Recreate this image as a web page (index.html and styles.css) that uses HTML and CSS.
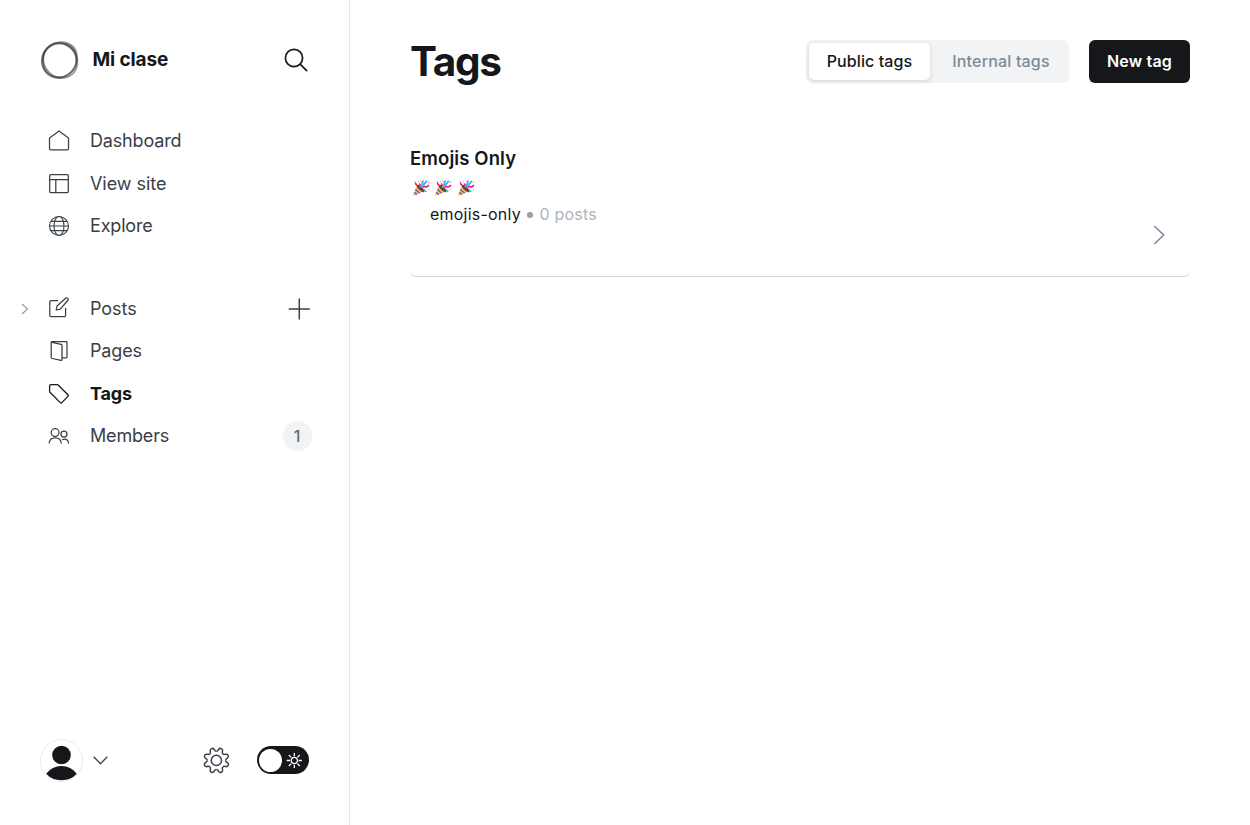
FILE: index.html
```html
<!DOCTYPE html>
<html lang="en">
<head>
<meta charset="utf-8">
<title>Tags</title>
<link rel="stylesheet" href="styles.css">
</head>
<body>
<svg class="defs" width="0" height="0">
  <symbol id="party" viewBox="0 0 18 18">
    <path d="M.8 16.7 5 6.2 12 12.6Z" fill="#ffc23d"/>
    <path d="M3.4 10.4 7.6 14.3M2.2 13.4 4.9 15.6" stroke="#6d62d8" stroke-width="1.5"/>
    <ellipse cx="8.6" cy="9.5" rx="1.9" ry="4.9" transform="rotate(-46 8.6 9.5)" fill="#6b4030"/>
    <path d="M7.9 8.6Q9 5.8 7.2 4.5M5.2 6.2Q2.8 5.4 4 3.5" fill="none" stroke="#f5128c" stroke-width="1.5"/>
    <path d="M8.6 8.6Q8.8 6 10.9 5.6 9.5 3.5 11.5 1.7M12 5.6 14.8 1.8M12 10.7 14.2 13" fill="none" stroke="#2bb6ee" stroke-width="1.7"/>
    <path d="M10.6 8.6Q12 6.4 13.3 8 14.8 8.4 16.9 6.1" fill="none" stroke="#f5128c" stroke-width="1.6"/>
    <path d="M2.2 1.8h1.3v1.3H2.2zM15.9 10h1.2v1.2h-1.2zM8 1.3h1.2v1.2H8z" fill="#ffc23d"/>
    <path d="M15.8 2.6h1.4V4h-1.4zM5.9 2h1.3v1.2H5.9z" fill="#ff92c6"/>
  </symbol>
</svg>
<div class="app">
  <aside class="sidebar">
    <header class="brand">
      <svg class="brand-logo" width="40" height="40" viewBox="0 0 40 40" fill="none">
        <ellipse cx="20.4" cy="20.4" rx="18.3" ry="16.4" transform="rotate(55 20.4 20.4)" stroke="#333" stroke-opacity=".5" stroke-width="1.6"/>
        <ellipse cx="19.2" cy="20.4" rx="17.2" ry="16.9" stroke="#222" stroke-opacity=".5" stroke-width="1.9"/>
        <ellipse cx="19.5" cy="20" rx="18.3" ry="16.6" transform="rotate(-52 19.5 20)" stroke="#333" stroke-opacity=".5" stroke-width="1.9"/>
        <path d="M22 3.2Q32 .8 36.5 9.5 39.5 17 36.2 25.5 37 14 31.5 9 27.5 4.5 22 3.2Z" fill="#555" fill-opacity=".4"/>
        <path d="M6.5 9Q.8 15 2.5 24 4 31 9.5 35 3.5 27 4 20 4.2 14 6.5 9Z" fill="#333" fill-opacity=".35"/>
      </svg>
      <span class="brand-name">Mi clase</span>
      <svg class="search" width="26" height="26" viewBox="0 0 26 26"><circle cx="11" cy="11" r="8.6"/><path d="m17.1 17.1 7 7"/></svg>
    </header>
    <nav class="nav">
      <ul class="group">
        <li class="item"><svg class="icon" viewBox="0 0 22 22"><path d="M11 1 1.5 8.1V18.5q0 1.3 1.3 1.3h16.4q1.3 0 1.3-1.3V8.1Z"/></svg><span class="label">Dashboard</span></li>
        <li class="item wide"><svg class="icon" viewBox="0 0 22 22"><rect x="1.7" y="2.5" width="18.6" height="18" rx="1"/><path d="M1.7 7.6h18.6M7.8 7.6v13"/></svg><span class="label">View site</span></li>
        <li class="item"><svg class="icon globe" viewBox="0 0 22 22"><circle cx="11" cy="11" r="9.5"/><ellipse cx="11" cy="11" rx="5" ry="9.5"/><path d="M1.5 11h19M3 6.4h16M3 15.6h16"/></svg><span class="label">Explore</span></li>
      </ul>
      <ul class="group">
        <li class="item wide"><svg class="expand" width="8" height="12" viewBox="0 0 8 12"><path d="m1 1 5.5 5L1 11"/></svg><svg class="icon" viewBox="0 0 22 22"><path d="M10 3.6H2.9q-1.1 0-1.1 1.1v13.7q0 1.1 1.1 1.1h13.6q1.1 0 1.1-1.1V11"/><path d="m8.2 13 .8-4 8.6-7.8q1.1-.8 2.1.2t.1 2.1L12.2 12.2Z"/></svg><span class="label">Posts</span><svg class="plus" width="22" height="22" viewBox="0 0 22 22"><path d="M11.3.5v21M.8 11h21"/></svg></li>
        <li class="item"><svg class="icon" viewBox="0 0 22 22"><path d="M3.2 2.2 13.2 4.4q.8.2.8 1v14.4q0 .8-.9.6L4.2 18.5q-1-.2-1-1V2.2q0-.7 1-.7h14q.8 0 .8.8v14.8q0 .8-.8.8H14"/></svg><span class="label">Pages</span></li>
        <li class="item active"><svg class="icon" viewBox="0 0 22 22"><path d="M1.6 9.4V3.7q0-1.2 1.2-1.2H9q.6 0 1.1.5l9.8 9.8q.8.8 0 1.6l-6 6.2q-.8.8-1.6 0L2.2 10.5Q1.6 10 1.6 9.4Z"/></svg><span class="label">Tags</span></li>
        <li class="item"><svg class="icon" viewBox="0 0 22 22"><circle cx="7.1" cy="7.6" r="3.9"/><circle cx="16" cy="9" r="3"/><path d="M1.2 18.5q.2-5.7 6-5.7t6 5.7M14.2 14.7q5.8-2 6.5 3.8"/></svg><span class="label">Members</span><span class="count">1</span></li>
      </ul>
    </nav>
    <footer class="account">
      <svg class="avatar" width="44" height="44" viewBox="0 0 44 44"><circle cx="21.5" cy="21.5" r="21" fill="#fff" stroke="#e9ebee"/><circle cx="21.5" cy="16" r="9.3"/><path d="M6.2 34.7Q12 27 21.5 27t15.3 7.7Q31 41.2 21.5 41.2T6.2 34.7Z"/></svg>
      <svg class="caret" width="16" height="10" viewBox="0 0 16 10"><path d="m.7.7 6.8 7 6.8-7"/></svg>
      <svg class="gear" width="28" height="28" viewBox="-14.4 -14.4 28 28">
        <circle r="5.1"/>
        <path id="tooth" transform="rotate(22.5)" d="M-3.52-8.5C-2.2-9.05-2.3-9.8-2.1-11Q-1.8-12.8 0-12.8T2.1-11C2.3-9.8 2.2-9.05 3.52-8.5"/>
        <use href="#tooth" transform="rotate(45)"/><use href="#tooth" transform="rotate(90)"/><use href="#tooth" transform="rotate(135)"/><use href="#tooth" transform="rotate(180)"/><use href="#tooth" transform="rotate(225)"/><use href="#tooth" transform="rotate(270)"/><use href="#tooth" transform="rotate(315)"/>
      </svg>
      <span class="toggle"><span class="knob"></span><svg class="sun" width="16" height="16" viewBox="-8.3 -8.5 16 16"><circle r="3.1"/><path d="M0-4.3v-3.3M0 4.3v3.3M-4.3 0h-3.3M4.3 0h3.3M3.1-3.1l2.4-2.4M-3.1-3.1l-2.4-2.4M3.1 3.1l2.4 2.4M-3.1 3.1l-2.4 2.4"/></svg></span>
    </footer>
  </aside>
  <main class="main">
    <header class="topbar">
      <h1 class="title">Tags</h1>
      <div class="tabs"><button class="tab selected">Public tags</button><button class="tab">Internal tags</button></div>
      <button class="new">New tag</button>
    </header>
    <article class="tag">
      <div class="details">
        <h2 class="tag-name">Emojis Only</h2>
        <p class="emojis"><svg class="emoji"><use href="#party"/></svg><svg class="emoji"><use href="#party"/></svg><svg class="emoji"><use href="#party"/></svg></p>
        <p class="meta"><span class="slug">emojis-only</span><span class="dot"></span><span class="posts">0 posts</span></p>
      </div>
      <svg class="open" width="12" height="20" viewBox="0 0 12 20"><path d="m1.4 1 9.2 9-9.2 9"/></svg>
    </article>
  </main>
</div>
</body>
</html>
```
FILE: styles.css
```css
* { box-sizing: border-box; }
body { margin: 0; background: #fff; color: #15171a; font-family: Inter, sans-serif; }
h1, h2, p, ul { margin: 0; padding: 0; }
ul { list-style: none; }
button { border: 0; padding: 0; font: inherit; color: inherit; background: none; }
svg { flex: none; display: block; }
.defs { position: absolute; }
.app { display: flex; height: 825px; overflow: hidden; }
.sidebar { width: 350px; flex: none; display: flex; flex-direction: column; border-right: 1px solid #e3e5e8; }
.brand { display: flex; align-items: center; height: 40px; margin: 40px 40px 0; }
.brand-name { margin-left: 12.5px; flex: 1; font-size: 19px; font-weight: 700; line-height: 38px; letter-spacing: -.13px; }
.search { fill: none; stroke: #15171a; stroke-width: 1.7; }
.nav { flex: 1; padding-top: 39.5px; }
.group + .group { margin-top: 40px; }
.item { display: flex; align-items: center; height: 42.5px; padding: 0 37px 0 48px; position: relative; color: #394047; font-size: 18px; letter-spacing: -.17px; }
.wide { letter-spacing: -.05px; }
.icon { width: 22px; height: 22px; fill: none; stroke: #394047; stroke-width: 1.25; stroke-linejoin: round; }
.globe { stroke-width: 1.1; }
.label { margin-left: 20px; flex: 1; }
.active { color: #15171a; font-weight: 700; }
.active .icon { stroke: #15171a; }
.expand { position: absolute; left: 21px; top: 15.5px; fill: none; stroke: #8f9ba6; stroke-width: 1.1; }
.plus { fill: none; stroke: #394047; stroke-width: 1.5; margin: 1px 2px 0 0; overflow: visible; }
.count { width: 29px; height: 30px; border-radius: 15px; background: #f1f3f4; color: #626d79; font-size: 16px; font-weight: 500; line-height: 31px; text-align: center; padding-right: 1px; }
.account { display: flex; align-items: center; height: 44px; margin: 0 40px 42px; }
.avatar { fill: #15171a; }
.caret { margin-left: 9px; fill: none; stroke: #394047; stroke-width: 1.3; }
.gear { margin: 0 0 2px 93px; fill: none; stroke: #394047; stroke-width: 1.5; }
.toggle { margin: 0 0 2px auto; display: flex; align-items: center; width: 52px; height: 28px; border-radius: 14px; background: #15171a; padding: 0 7px 0 2px; justify-content: space-between; }
.knob { width: 23px; height: 23px; border-radius: 50%; background: #fff; }
.sun { fill: none; stroke: #fff; stroke-width: 1.3; }
.main { flex: 1; padding: 40px 60px 0; }
.topbar { display: flex; align-items: center; height: 43px; }
.title { flex: 1; font-size: 40.5px; font-weight: 700; line-height: 43px; letter-spacing: -1.3px; }
.tabs { display: flex; width: 263px; height: 43px; padding: 3px; border-radius: 7px; background: #f1f3f4; font-size: 16px; font-weight: 500; }
.tab { flex: 1; color: #7c8b9a; padding: 0 0 2px 6px; letter-spacing: .17px; }
.selected { flex: none; width: 121px; height: 37px; padding-left: 0; border-radius: 5px; background: #fff; color: #15171a; letter-spacing: .1px; box-shadow: 0 1px 4px #15171a26; }
.new { width: 101px; height: 43px; margin-left: 20px; padding-bottom: 2px; border-radius: 6px; background: #15171a; color: #fff; font-size: 16px; font-weight: 600; letter-spacing: .2px; }
.tag { display: flex; align-items: center; margin-top: 60px; height: 134px; border-bottom: 1px solid #ced4d9; border-radius: 6px; padding-right: 25px; }
.details { flex: 1; align-self: flex-start; }
.tag-name { font-size: 18.5px; font-weight: 600; line-height: 30px; padding-bottom: 1px; letter-spacing: .1px; }
.emojis { display: flex; gap: 4.5px; padding: 5px 0 0 1.5px; }
.emoji { width: 18px; height: 18px; }
.meta { display: flex; align-items: center; height: 24px; margin-top: 4.5px; padding-left: 20px; font-size: 16px; letter-spacing: .22px; }
.dot { width: 5.5px; height: 5.5px; border-radius: 50%; background: #95a1ad; margin: 3px 6.5px 0; }
.posts { color: #abb4be; }
.open { margin-top: 50px; fill: none; stroke: #7c8b9a; stroke-width: 1.6; }
```
